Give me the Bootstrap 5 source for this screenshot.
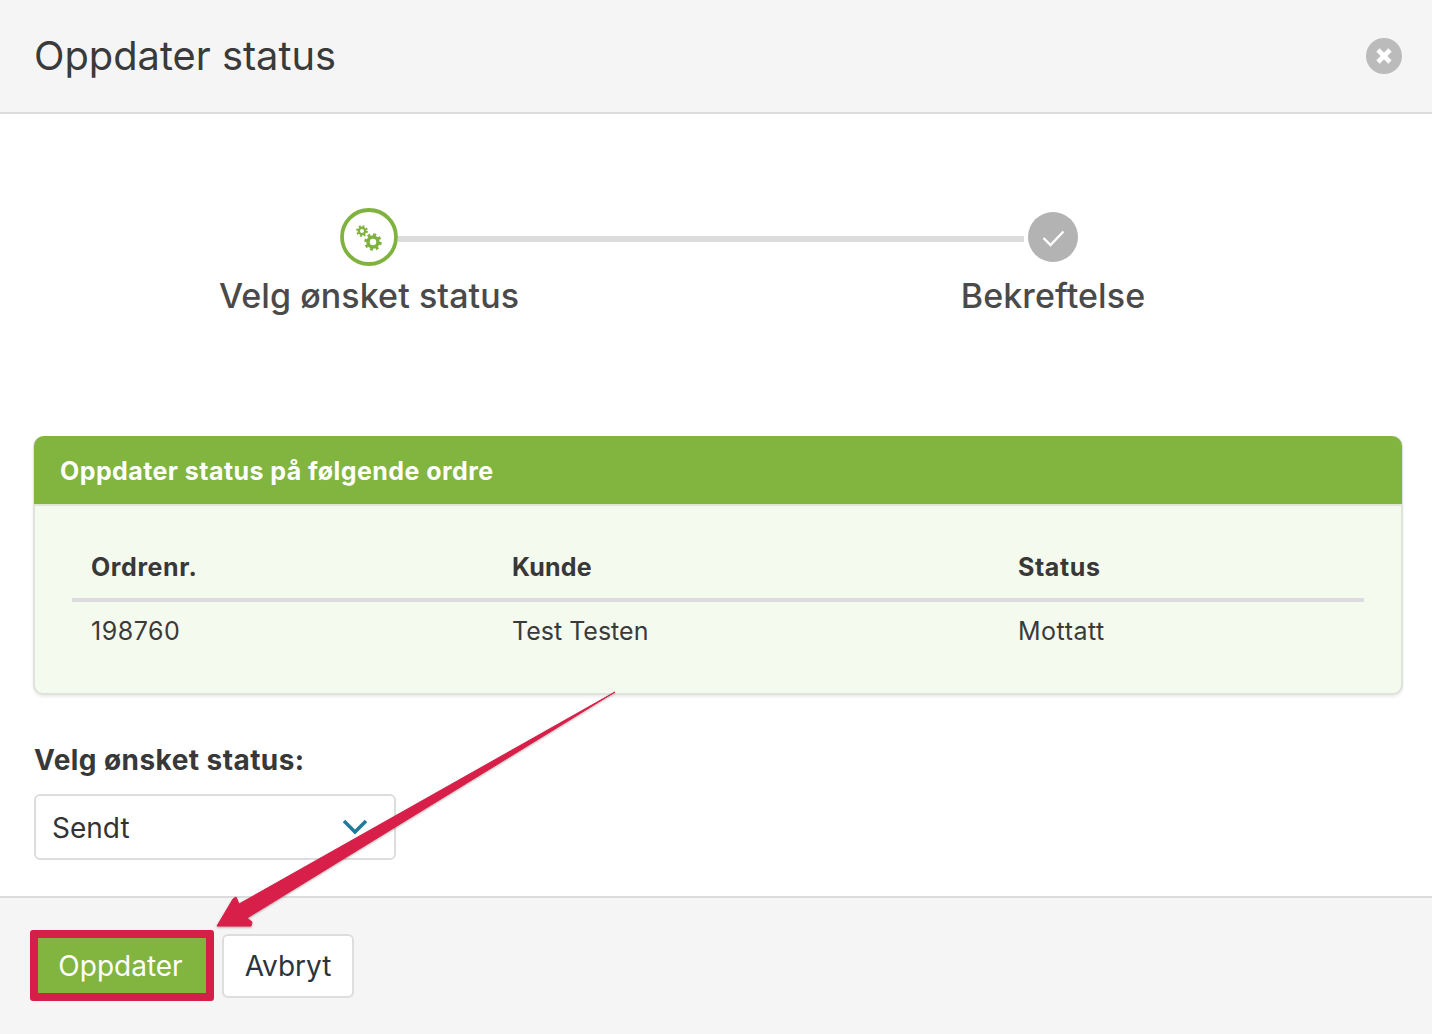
<!DOCTYPE html>
<html lang="no">
<head>
<meta charset="utf-8">
<title>Oppdater status</title>
<link href="https://cdn.jsdelivr.net/npm/bootstrap@5.3.0/dist/css/bootstrap.min.css" rel="stylesheet">
<style>
html,body{height:1034px;overflow:hidden}
body{font-family:Inter,"Liberation Sans",sans-serif;color:#333;background:#fff;position:relative}
.dlg{height:1034px}
.dlg-head{height:114px;background:#f5f5f5;border-bottom:2px solid #dcdcdc;padding:0 30px 0 34px}
.dlg-title{font-size:39.8px;font-weight:400;color:#3a3a3a;margin:0}
.close-ico{width:36px;height:36px;border:0;padding:0;background:transparent}
.dlg-body{height:782px;padding:94px 30px 0 34px}
.icon-row{margin-left:306px;width:738px;height:58px}
.step-on{width:58px;height:58px;flex:none}
.step-line{height:6px;background:#dcdcdc;margin:4px 4px 0 0}
.step-off{width:50px;height:50px;flex:none}
.labels{margin:10px 0 0 -7px;width:1368px}
.lab{width:684px;text-align:center;font-size:34px;font-weight:500;line-height:40px;color:#4a4a4a;letter-spacing:.08px}
.ord{margin:120px -1px 0;border:2px solid #e0e2dc;border-top:0;border-radius:10px;background:#f5faef;height:259px;box-shadow:0 2px 3px rgba(0,0,0,.08)}
.ord-head{background:#82b440;color:#fff;height:70px;margin:0 -1px;padding:3px 26px 0;border-radius:10px 10px 0 0;font-size:25px;font-weight:700;letter-spacing:.43px;border-bottom:2px solid #dfe6d5}
.ord-wrap{padding:38px 37px 0}
.ord-tbl{--bs-table-bg:transparent;margin:0;font-size:25px;color:#333;table-layout:fixed;letter-spacing:.5px}
.ord-tbl th{font-weight:700;padding:4px 19px 12px;border-bottom:4px solid #dcdcdc;height:56px;color:#383838;letter-spacing:.6px}
.ord-tbl th:nth-child(2){letter-spacing:.2px}
.ord-tbl td{padding:11px 19px;border:0;color:#3a3a3a}
.ord-tbl td:nth-child(2){letter-spacing:0}
.lbl{font-size:28px;font-weight:700;color:#383838;margin:47px 0 16px 0;line-height:36px;display:block;letter-spacing:.44px}
.sel{width:362px;height:66px;border:2px solid #ddd;border-radius:6px;font-size:28px;color:#333;padding:2px 50px 0 16px;background-position:right 26px center;background-size:26px 16px;background-image:url("data:image/svg+xml,%3Csvg xmlns='http://www.w3.org/2000/svg' viewBox='0 0 26 16'%3E%3Cpath d='M2 2l11 11L24 2' fill='none' stroke='%231f7a9c' stroke-width='3.5'/%3E%3C/svg%3E")}
.dlg-foot{height:138px;background:#f5f5f5;border-top:2px solid #dcdcdc;padding:0 0 0 30px;gap:8px}
.btn-upd{background:#82b440;color:#fff;font-size:28px;border:8px solid #d61f47;border-radius:3px;width:184px;height:71px;padding:1px 3px 0 0;margin-top:-1px}
.btn-upd:hover{background:#82b440;color:#fff;border-color:#d61f47}
.btn-cancel{background:#fff;color:#2a3440;font-size:28px;border:2px solid #ddd;border-radius:6px;width:132px;height:64px;padding:0}
.arrow{position:absolute;left:0;top:0;pointer-events:none;filter:drop-shadow(0 1px 1px rgba(60,0,10,.35))}
</style>
</head>
<body>
<div class="dlg d-flex flex-column">
  <div class="dlg-head d-flex align-items-center justify-content-between">
    <h1 class="dlg-title">Oppdater status</h1>
    <button class="close-ico" aria-label="Lukk">
      <svg width="36" height="36" viewBox="0 0 36 36"><circle cx="18" cy="18" r="18" fill="#bbb"/><path d="M12 12l12 12M24 12L12 24" stroke="#fff" stroke-width="4.6" fill="none"/></svg>
    </button>
  </div>
  <div class="dlg-body">
    <div class="icon-row d-flex align-items-center">
      <svg class="step-on" viewBox="0 0 58 58">
        <circle cx="29" cy="29" r="27" fill="#fff" stroke="#7fb23f" stroke-width="3.800"/>
        <circle cx="33" cy="34" r="5" fill="none" stroke="#7fb23f" stroke-width="3.600"/>
        <circle cx="33" cy="34" r="7.400" fill="none" stroke="#7fb23f" stroke-width="2.800" stroke-dasharray="2.900 2.910"/>
        <circle cx="22" cy="23" r="3.200" fill="none" stroke="#7fb23f" stroke-width="2.400"/>
        <circle cx="22" cy="23" r="4.900" fill="none" stroke="#7fb23f" stroke-width="2" stroke-dasharray="1.900 1.950"/>
      </svg>
      <div class="step-line flex-grow-1"></div>
      <svg class="step-off" viewBox="0 0 50 50">
        <circle cx="25" cy="25" r="25" fill="#b3b3b3"/>
        <path d="M15.500 26l7 7 13-13.500" fill="none" stroke="#fff" stroke-width="2.400"/>
      </svg>
    </div>
    <div class="labels d-flex">
      <div class="lab">Velg ønsket status</div>
      <div class="lab">Bekreftelse</div>
    </div>
    <div class="ord">
      <div class="ord-head d-flex align-items-center">Oppdater status på følgende ordre</div>
      <div class="ord-wrap">
        <table class="table ord-tbl">
          <colgroup><col style="width:421px"><col style="width:506px"><col></colgroup>
          <thead><tr><th>Ordrenr.</th><th>Kunde</th><th>Status</th></tr></thead>
          <tbody><tr><td>198760</td><td>Test Testen</td><td>Mottatt</td></tr></tbody>
        </table>
      </div>
    </div>
    <label class="lbl" for="st">Velg ønsket status:</label>
    <select id="st" class="form-select sel"><option>Sendt</option></select>
  </div>
  <div class="dlg-foot d-flex align-items-center">
    <button class="btn btn-upd">Oppdater</button>
    <button class="btn btn-cancel">Avbryt</button>
  </div>
</div>
<svg class="arrow" width="1432" height="1034" viewBox="0 0 1432 1034">
  <polygon points="615,692 247,918 252,922 251,926 217,926 233,899 236,897 239,904" fill="#d81f49" stroke="#d81f49" stroke-width="1" stroke-linejoin="round"/>
</svg>
</body>
</html>
